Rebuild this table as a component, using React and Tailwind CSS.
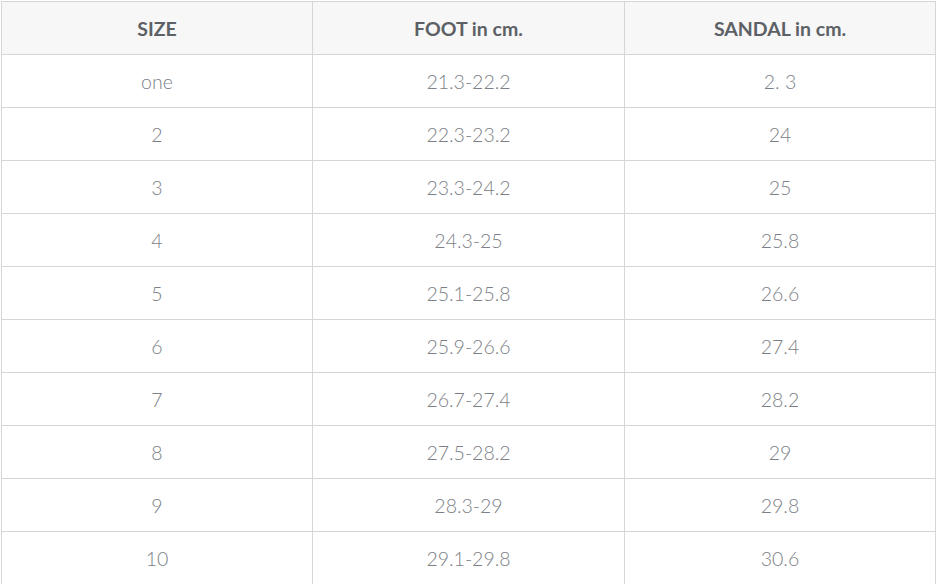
import React from 'react';

const rows = [
  ['one', '21.3-22.2', '2. 3'],
  ['2', '22.3-23.2', '24'],
  ['3', '23.3-24.2', '25'],
  ['4', '24.3-25', '25.8'],
  ['5', '25.1-25.8', '26.6'],
  ['6', '25.9-26.6', '27.4'],
  ['7', '26.7-27.4', '28.2'],
  ['8', '27.5-28.2', '29'],
  ['9', '28.3-29', '29.8'],
  ['10', '29.1-29.8', '30.6'],
];

const App = () => {
  return (
    <div className="w-[937px] h-[584px] overflow-hidden bg-white pt-px pl-px" style={{ fontFamily: 'Lato, "Open Sans", sans-serif' }}>
      <table className="w-[935px] border-collapse table-fixed">
        <thead>
          <tr className="h-[53px] bg-[#f7f7f7]">
            <th className="w-[311px] border border-[#d6d6d6] pt-[2px] text-[19.5px] font-bold text-[#5d6166]">SIZE</th>
            <th className="w-[312px] border border-[#d6d6d6] pt-[2px] text-[19.5px] font-bold text-[#5d6166]">FOOT in cm.</th>
            <th className="border border-[#d6d6d6] pt-[2px] text-[19.5px] font-bold text-[#5d6166]">SANDAL in cm.</th>
          </tr>
        </thead>
        <tbody>
          {rows.map((r, i) => (
            <tr key={i} className="h-[53px]">
              {r.map((c, j) => (
                <td key={j} className="border border-[#d6d6d6] pt-[2px] text-center text-[19.5px] font-light text-[#7c8086]">
                  {c}
                </td>
              ))}
            </tr>
          ))}
        </tbody>
      </table>
    </div>
  );
};

export default App;
